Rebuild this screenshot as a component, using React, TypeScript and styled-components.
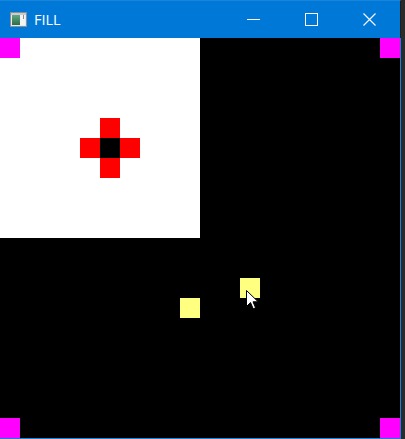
import React from "react";
import styled, { createGlobalStyle } from "styled-components";

const Global = createGlobalStyle`
  html, body { margin: 0; padding: 0; background: #2b2b2b; overflow: hidden; }
  #root { width: 405px; height: 439px; }
`;

const Window = styled.div`
  width: 401px;
  display: flex;
  flex-direction: column;
`;

const TitleBar = styled.div`
  height: 37px;
  border-top: 1px solid #1a86db;
  background: #0078d7;
  display: flex;
  align-items: center;
  border-right: 1px solid #1f1f1f;
`;

const AppIcon = styled.svg`
  margin-left: 10px;
  width: 17px;
  height: 15px;
  flex: none;
`;

const Title = styled.span`
  margin-left: 7px;
  font-family: "Open Sans", "Noto Sans", sans-serif;
  font-size: 14.5px;
  font-weight: 400;
  color: #ffffff;
  flex: 1;
  line-height: 1;
  padding-top: 1px;
`;

const Buttons = styled.div`
  display: flex;
  height: 100%;
  margin-right: 2px;
`;

const CaptionButton = styled.div`
  width: 58px;
  height: 100%;
  display: flex;
  align-items: center;
  justify-content: center;
`;

const Client = styled.div`
  width: 400px;
  height: 400px;
  background: #000;
  border-right: 1px solid #1883d7;
  border-bottom: 1px solid #1883d7;
  position: relative;
  display: grid;
  grid-template-columns: repeat(20, 20px);
  grid-template-rows: repeat(20, 20px);
`;

const Cell = styled.div<{ $c: number; $r: number; $w?: number; $h?: number; $color: string }>`
  grid-column: ${(p) => p.$c} / span ${(p) => p.$w ?? 1};
  grid-row: ${(p) => p.$r} / span ${(p) => p.$h ?? 1};
  background: ${(p) => p.$color};
`;

const Cursor = styled.svg`
  position: absolute;
  left: 246px;
  top: 252px;
  width: 13px;
  height: 20px;
`;

const MAGENTA = "#ff00ff";
const RED = "#ff0000";
const YELLOW = "#ffff80";

export default function App() {
  return (
    <>
      <Global />
      <Window>
        <TitleBar>
          <AppIcon viewBox="0 0 17 15">
            <defs>
              <linearGradient id="g" x1="0" y1="0" x2="0" y2="1">
                <stop offset="0" stopColor="#5fa882" />
                <stop offset="1" stopColor="#2c6e4a" />
              </linearGradient>
            </defs>
            <rect x="0.5" y="0.5" width="16" height="14" fill="#e8e8e8" stroke="#8a8f96" />
            <rect x="2" y="3" width="8" height="10" fill="url(#g)" />
            <rect x="10" y="3" width="5" height="10" fill="#f4f4f4" />
            <rect x="13" y="3" width="1" height="4" fill="#8a8f96" />
            <rect x="1" y="1" width="15" height="2" fill="#c9ccd0" />
          </AppIcon>
          <Title>FILL</Title>
          <Buttons>
            <CaptionButton>
              <svg width="13" height="13" viewBox="0 0 13 13">
                <line x1="0" y1="6.5" x2="13" y2="6.5" stroke="#fff" strokeWidth="1" />
              </svg>
            </CaptionButton>
            <CaptionButton>
              <svg width="13" height="13" viewBox="0 0 13 13">
                <rect x="0.5" y="0.5" width="12" height="12" fill="none" stroke="#fff" strokeWidth="1" />
              </svg>
            </CaptionButton>
            <CaptionButton>
              <svg width="13" height="13" viewBox="0 0 13 13">
                <path d="M0.5 0.5 L12.5 12.5 M12.5 0.5 L0.5 12.5" stroke="#fff" strokeWidth="1.1" />
              </svg>
            </CaptionButton>
          </Buttons>
        </TitleBar>
        <Client>
          <Cell $c={1} $r={1} $w={10} $h={10} $color="#ffffff" />
          <Cell $c={1} $r={1} $color={MAGENTA} />
          <Cell $c={20} $r={1} $color={MAGENTA} />
          <Cell $c={1} $r={20} $color={MAGENTA} />
          <Cell $c={20} $r={20} $color={MAGENTA} />
          <Cell $c={6} $r={5} $color={RED} />
          <Cell $c={5} $r={6} $color={RED} />
          <Cell $c={6} $r={6} $color="#000000" />
          <Cell $c={7} $r={6} $color={RED} />
          <Cell $c={6} $r={7} $color={RED} />
          <Cell $c={13} $r={13} $color={YELLOW} />
          <Cell $c={10} $r={14} $color={YELLOW} />
          <Cursor viewBox="0 0 13 20">
            <path
              d="M0.5 0.5 L0.5 16.5 L4.5 12.5 L7.2 18.8 L9.6 17.8 L7 11.8 L12.2 11.8 Z"
              fill="#fff"
              stroke="#000"
              strokeWidth="1"
              strokeLinejoin="miter"
            />
          </Cursor>
        </Client>
      </Window>
    </>
  );
}
